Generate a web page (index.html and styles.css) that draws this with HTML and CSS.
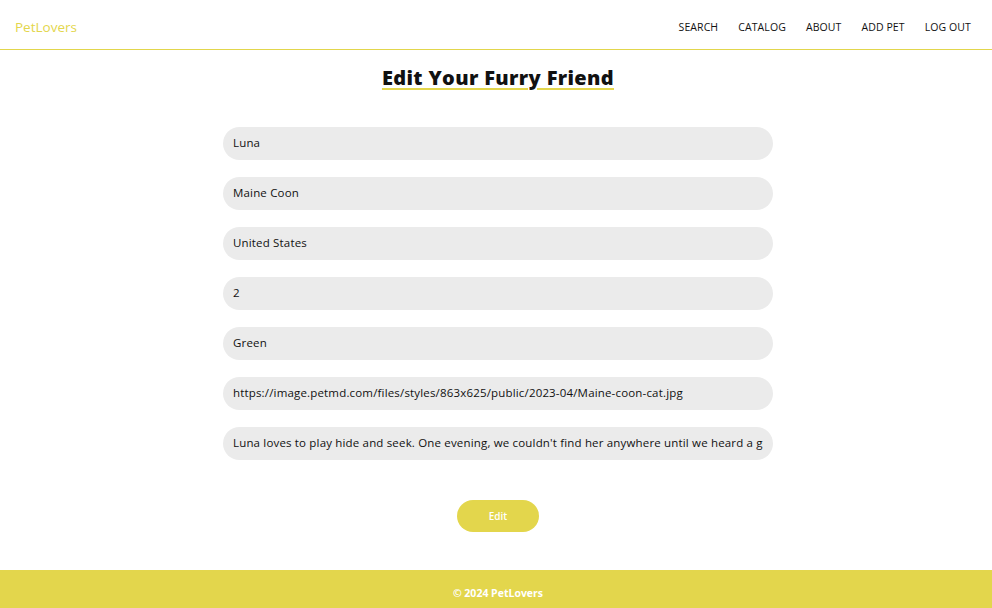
FILE: index.html
```html
<!DOCTYPE html>
<html lang="en">
<head>
<meta charset="utf-8">
<title>PetLovers - Edit</title>
<link rel="stylesheet" href="styles.css">
</head>
<body>
<header class="site-header">
  <a class="logo" href="#">PetLovers</a>
  <nav class="nav">
    <a href="#">SEARCH</a>
    <a href="#">CATALOG</a>
    <a href="#">ABOUT</a>
    <a href="#">ADD PET</a>
    <a href="#">LOG OUT</a>
  </nav>
</header>
<main class="main">
  <h1 class="title">Edit Your Furry Friend</h1>
  <form class="form">
    <input class="field" type="text" value="Luna">
    <input class="field" type="text" value="Maine Coon">
    <input class="field" type="text" value="United States">
    <input class="field" type="text" value="2">
    <input class="field" type="text" value="Green">
    <input class="field" type="text" value="https://image.petmd.com/files/styles/863x625/public/2023-04/Maine-coon-cat.jpg">
    <input class="field" type="text" value="Luna loves to play hide and seek. One evening, we couldn't find her anywhere until we heard a gentle purr coming from the laundry basket.">
    <button class="btn" type="button">Edit</button>
  </form>
</main>
<footer class="site-footer">© 2024 PetLovers</footer>
</body>
</html>
```
FILE: styles.css
```css
* { box-sizing: border-box; }
html, body { margin: 0; padding: 0; }
body {
  font-family: "Open Sans", "Liberation Sans", sans-serif;
  color: #111;
  background: #fff;
  min-height: 608px;
  display: flex;
  flex-direction: column;
}
.site-header {
  height: 50px;
  border-bottom: 1px solid #e2d64c;
  display: flex;
  align-items: center;
  justify-content: space-between;
  padding: 0 15px 0 15px;
}
.logo {
  color: #e3d64c;
  text-decoration: none;
  font-size: 13.5px;
  font-weight: 500;
  padding-top: 4px;
}
.nav {
  display: flex;
  gap: 20px;
  padding-top: 4px;
  padding-right: 6px;
}
.nav a {
  color: #111;
  text-decoration: none;
  font-size: 10.5px;
  letter-spacing: 0.1px;
}
.main {
  flex: 1;
  display: flex;
  flex-direction: column;
  align-items: center;
  padding-left: 4px;
}
.title {
  margin: 14px 0 0 0;
  font-size: 20px;
  font-weight: 800;
  line-height: 28px;
  letter-spacing: 0.35px;
  text-decoration: underline;
  text-decoration-color: #e3d64c;
  text-decoration-thickness: 2px;
  text-underline-offset: 3px;
}
.form {
  margin-top: 35px;
  width: 550px;
  display: flex;
  flex-direction: column;
  align-items: center;
  gap: 17px;
}
.field {
  width: 100%;
  height: 33px;
  border: none;
  outline: none;
  border-radius: 17px;
  background: #ebebeb;
  padding: 0 10px 2px 10px;
  font-family: inherit;
  font-size: 11.5px;
  letter-spacing: 0.17px;
  color: #111;
}
.btn {
  margin-top: 23px;
  width: 82px;
  height: 32px;
  border: none;
  border-radius: 16px;
  background: #e3d64c;
  color: #fff;
  font-family: inherit;
  font-size: 10px;
  font-weight: 600;
}
.site-footer {
  height: 38px;
  background: #e3d64c;
  color: #fff;
  font-size: 10.5px;
  font-weight: 700;
  display: flex;
  align-items: center;
  justify-content: center;
  padding-top: 7px;
  padding-left: 4px;
}
```
